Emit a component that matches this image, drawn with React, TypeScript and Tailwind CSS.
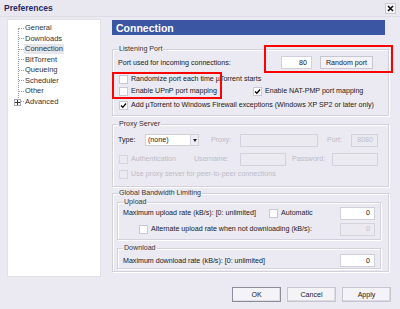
import React from "react";

const Cb = ({ checked = false, disabled = false }: { checked?: boolean; disabled?: boolean }) => (
  <span
    className={
      disabled
        ? "inline-flex w-[9px] h-[9px] shrink-0 border border-[#d6d5de] bg-[#eceaf1]"
        : "inline-flex w-[9px] h-[9px] shrink-0 border border-[#c9c8d4] bg-white items-center justify-center"
    }
  >
    {checked && (
      <svg width="7" height="7" viewBox="0 0 7 7">
        <path d="M1 3.5 L2.8 5.3 L6 1.5" stroke="#000" strokeWidth="1.3" fill="none" />
      </svg>
    )}
  </span>
);

const Input = ({ value = "", w, disabled = false }: { value?: string; w: string; disabled?: boolean }) => (
  <div
    className={
      (disabled
        ? "bg-[#eceaf1] border border-[#d4d3dc] text-[#c0bfc8] "
        : "bg-white border border-[#d0cfda] text-[#111] ") +
      "h-[13px] flex items-center justify-end pr-[4px] shrink-0 " +
      w
    }
  >
    {value}
  </div>
);

const Btn = ({ label, def = false }: { label: string; def?: boolean }) => (
  <div
    className={
      (def ? "border-[#8d8c98] " : "border-[#c6c5d0] ") +
      "w-[49px] h-[15px] border bg-[#f4f3f8] flex items-center justify-center text-[#222] shadow-[inset_-1px_-1px_0_#dcdbe4]"
    }
  >
    {label}
  </div>
);

const treeItems = ["General", "Downloads", "Connection", "BitTorrent", "Queueing", "Scheduler", "Other", "Advanced"];

export default function App() {
  return (
    <div
      className="w-[400px] h-[309px] bg-[#ebe9f1] text-[7.1px] leading-[10px] text-[#1a1a1a] overflow-hidden relative whitespace-nowrap"
      style={{ fontFamily: '"Liberation Sans", Arial, sans-serif' }}
    >
      {/* Title bar */}
      <div className="h-[17px] flex items-center justify-between pl-[4px] pr-[4px] bg-[#e9e8f0] border-b border-[#dedde6]">
        <span className="text-[8.5px] font-semibold text-[#2a2a62]">Preferences</span>
        <div className="w-[11px] h-[11px] border border-[#c9c8d3] bg-[#f5f4f9] flex items-center justify-center">
          <svg width="7" height="7" viewBox="0 0 7 7">
            <path d="M1 1 L6 6 M6 1 L1 6" stroke="#111" strokeWidth="1.6" />
          </svg>
        </div>
      </div>

      <div className="flex pl-[7px] pt-[2px]">
        {/* Tree */}
        <div className="w-[94px] h-[258px] bg-white border border-[#e2e1ea] pt-[3px] relative text-[7.5px]">
          <div className="absolute left-[10px] top-[8px] h-[76px] border-l border-dotted border-[#9a9aa6]" />
          {treeItems.map((t, i) => (
            <div key={t} className="h-[10.5px] flex items-center relative">
              <span className="w-[5px] ml-[11px] border-t border-dotted border-[#9a9aa6]" />
              {i === 7 && (
                <span className="absolute left-[6px] top-[2px] w-[7px] h-[7px] bg-white border border-[#a8a8b4] flex items-center justify-center">
                  <svg width="5" height="5" viewBox="0 0 5 5">
                    <path d="M0 2.5 H5 M2.5 0 V5" stroke="#333" strokeWidth="1" />
                  </svg>
                </span>
              )}
              <span
                className={
                  i === 2
                    ? "ml-[0px] px-[1px] bg-[#e6e5ec] text-[#333]"
                    : "ml-[0px] px-[1px] text-[#333]"
                }
              >
                {t}
              </span>
            </div>
          ))}
        </div>

        {/* Right panel */}
        <div className="ml-[11px] w-[277px] flex flex-col pt-[1px]">
          <div className="w-[273px] h-[15px] bg-[#3b57a4] flex items-center pl-[4px] text-white font-bold text-[10.5px]">
            Connection
          </div>

          {/* Listening Port */}
          <fieldset className="mt-[9px] border border-[#d3d1dc] shadow-[inset_1px_1px_0_#fff,1px_1px_0_#fff] px-[5px] pb-[5px]">
            <legend className="px-[1px] leading-[10px] text-[#333]">Listening Port</legend>
            <div className="flex items-center h-[13px] mt-[2px] pr-[10px]">
              <span>Port used for incoming connections:</span>
              <span className="flex-1" />
              <Input value="80" w="w-[31px]" />
              <div className="ml-[8px] w-[53px] h-[13px] border border-[#c6c5d0] bg-[#f4f3f8] flex items-center justify-center">
                Random port
              </div>
            </div>
            <div className="flex items-center h-[10px] mt-[5px] pl-[1px]">
              <Cb />
              <span className="ml-[3px]">Randomize port each time µTorrent starts</span>
            </div>
            <div className="flex items-center h-[10px] mt-[2px] pl-[1px]">
              <Cb />
              <span className="ml-[3px] w-[122px]">Enable UPnP port mapping</span>
              <Cb checked />
              <span className="ml-[3px]">Enable NAT-PMP port mapping</span>
            </div>
            <div className="flex items-center h-[10px] mt-[4px] pl-[1px]">
              <Cb checked />
              <span className="ml-[3px]">Add µTorrent to Windows Firewall exceptions (Windows XP SP2 or later only)</span>
            </div>
          </fieldset>

          {/* Proxy Server */}
          <fieldset className="mt-[3px] border border-[#d3d1dc] shadow-[inset_1px_1px_0_#fff,1px_1px_0_#fff] px-[5px] pb-[7px]">
            <legend className="px-[1px] leading-[10px] text-[#333]">Proxy Server</legend>
            <div className="flex items-center h-[12px] mt-[5px]">
              <span className="w-[27px]">Type:</span>
              <div className="w-[54px] h-[12px] bg-white border border-[#d0cfda] flex items-center justify-between pl-[2px]">
                <span>(none)</span>
                <span className="w-[8px] h-[10px] bg-[#eeedf3] border-l border-[#d6d5de] flex items-center justify-center">
                  <svg width="4" height="3" viewBox="0 0 4 3">
                    <path d="M0 0 H4 L2 3 Z" fill="#222" />
                  </svg>
                </span>
              </div>
              <span className="ml-[12px] w-[29px] text-[#bdbcc6]">Proxy:</span>
              <Input w="w-[78px]" disabled />
              <span className="ml-[9px] w-[24px] text-[#bdbcc6]">Port:</span>
              <Input value="8080" w="w-[27px]" disabled />
            </div>
            <div className="flex items-center h-[12px] mt-[7px]">
              <div className="w-[76px] flex items-center pl-[1px]">
                <Cb disabled />
                <span className="ml-[3px] text-[#bdbcc6]">Authentication</span>
              </div>
              <span className="w-[46px] text-[#bdbcc6]">Username:</span>
              <Input w="w-[46px]" disabled />
              <span className="ml-[6px] w-[40px] text-[#bdbcc6]">Password:</span>
              <Input w="w-[46px]" disabled />
            </div>
            <div className="flex items-center h-[10px] mt-[4px] pl-[1px]">
              <Cb disabled />
              <span className="ml-[3px] text-[#bdbcc6]">Use proxy server for peer-to-peer connections</span>
            </div>
          </fieldset>

          {/* Global Bandwidth Limiting */}
          <fieldset className="mt-[1px] border border-[#d3d1dc] shadow-[inset_1px_1px_0_#fff,1px_1px_0_#fff] pl-[4px] pr-[7px] pb-[2px]">
            <legend className="ml-[1px] px-[1px] leading-[10px] text-[#333]">Global Bandwidth Limiting</legend>
            <fieldset className="-mt-[1px] border border-[#d3d1dc] shadow-[inset_1px_1px_0_#fff,1px_1px_0_#fff] pl-[5px] pr-[5px] pb-[4px]">
              <legend className="px-[1px] leading-[10px] text-[#333]">Upload</legend>
              <div className="flex items-center h-[12px]">
                <span className="w-[146px]">Maximum upload rate (kB/s): [0: unlimited]</span>
                <Cb />
                <span className="ml-[3px]">Automatic</span>
                <span className="flex-1" />
                <Input value="0" w="w-[35px]" />
              </div>
              <div className="flex items-center h-[12px] mt-[4px] pl-[16px]">
                <Cb />
                <span className="ml-[3px]">Alternate upload rate when not downloading (kB/s):</span>
                <span className="flex-1" />
                <Input value="0" w="w-[35px]" disabled />
              </div>
            </fieldset>
            <fieldset className="mt-[3px] border border-[#d3d1dc] shadow-[inset_1px_1px_0_#fff,1px_1px_0_#fff] pl-[5px] pr-[5px] pb-[1px]">
              <legend className="px-[1px] leading-[10px] text-[#333]">Download</legend>
              <div className="flex items-center h-[13px] mt-[1px]">
                <span>Maximum download rate (kB/s): [0: unlimited]</span>
                <span className="flex-1" />
                <Input value="0" w="w-[35px]" />
              </div>
            </fieldset>
          </fieldset>
        </div>
      </div>

      {/* Footer buttons */}
      <div className="flex justify-end gap-[6px] pr-[9px] mt-[10px]">
        <Btn label="OK" def />
        <Btn label="Cancel" />
        <Btn label="Apply" />
      </div>

      {/* Red annotation boxes */}
      <div className="absolute left-[264px] top-[45px] w-[129px] h-[28px] border-2 border-[#ff0000]" />
      <div className="absolute left-[112px] top-[72px] w-[110px] h-[27px] border-2 border-[#ff0000]" />
    </div>
  );
}
